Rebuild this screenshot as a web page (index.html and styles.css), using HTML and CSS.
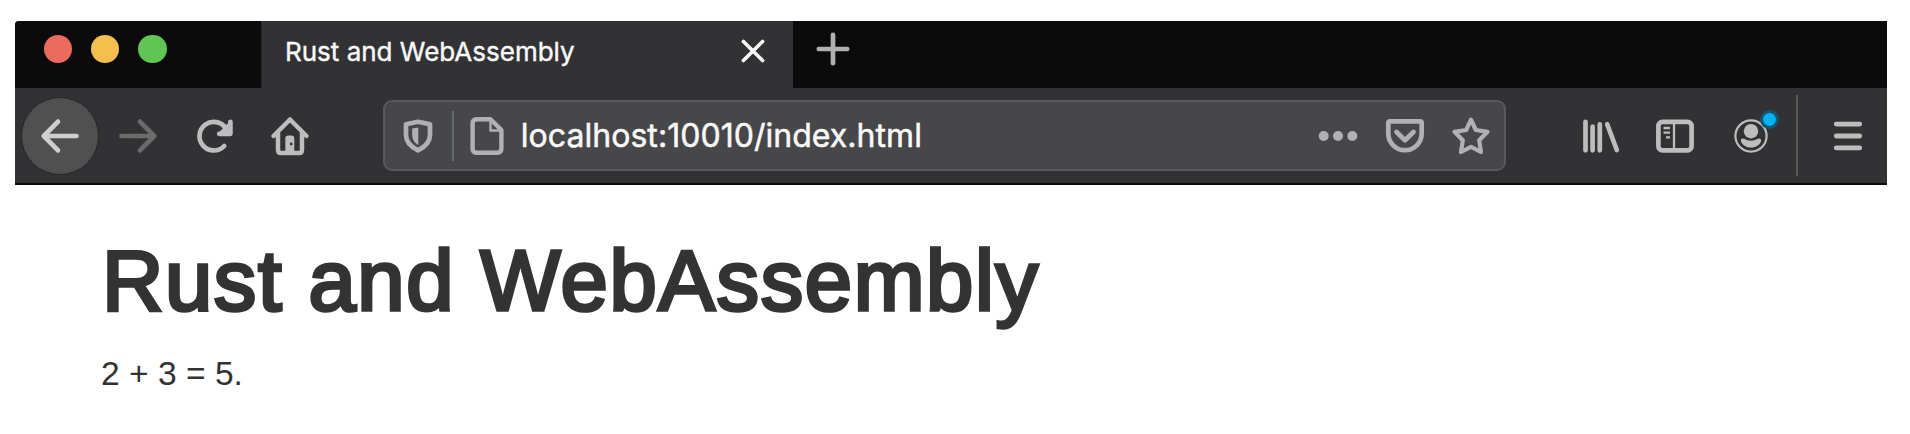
FILE: index.html
```html
<!DOCTYPE html>
<html lang="en">
<head>
<meta charset="utf-8">
<title>Rust and WebAssembly</title>
<link rel="stylesheet" href="styles.css">
</head>
<body>
<div class="browser">
  <div class="tabbar">
    <div class="lights">
      <span class="light red"></span>
      <span class="light yellow"></span>
      <span class="light green"></span>
    </div>
    <div class="tab">
      <span class="tab-title">Rust and WebAssembly</span>
      <svg class="close" viewBox="0 0 24 24"><path d="M2.4 2.4 21.6 21.6M21.6 2.4 2.4 21.6"/></svg>
    </div>
    <svg class="icon plus" viewBox="0 0 40 40"><path d="M20 5.8v28.4M5.8 20h28.4"/></svg>
  </div>
  <div class="toolbar">
    <div class="back">
      <svg class="icon" viewBox="0 0 40 40"><path d="M36.5 20H4M18 5.6 3.8 20 18 34.4"/></svg>
    </div>
    <svg class="icon forward" viewBox="0 0 40 40"><path d="M3.5 20H36M22 5.6 36.2 20 22 34.4"/></svg>
    <svg class="icon reload" viewBox="0 0 40 40">
      <path d="M29.2 30A14.3 14.3 0 1 1 31 12.7"/>
      <path class="solid" d="M33.2 7v11.3H22z"/>
      <path d="M35.4 5.8v12H24.2"/>
    </svg>
    <svg class="icon home" viewBox="0 0 40 40">
      <path d="M3.5 20 20 3.5 36.5 20M8 17v17q0 3 3 3h18q3 0 3-3V17"/>
      <path class="solid" d="M15.3 38V22.5q0-3 3-3h3q3 0 3 3V38z"/>
      <circle class="knob" cx="21.2" cy="28" r="1.4"/>
    </svg>
    <div class="urlbar">
      <svg class="icon shield" viewBox="0 0 40 40">
        <path d="M20 5.8 32 8.2V19q0 9.5-12 15.3Q8 28.5 8 19V8.2z"/>
        <path class="solid" d="M20.3 11.4v17.8Q14.2 25.5 14.2 19v-6.6z"/>
      </svg>
      <span class="divider"></span>
      <svg class="icon doc" viewBox="0 0 40 40">
        <path d="M23.5 3.3H9.5q-3.9 0-3.9 3.9v25.600q0 3.900 3.900 3.900h21q3.900 0 3.900-3.900V14z"/>
        <path class="thin" d="M23.500 4v10.500H34"/>
      </svg>
      <span class="url">localhost:10010/index.html</span>
      <svg class="icon dots" viewBox="0 0 40 40"><circle class="solid" cx="5.700" cy="20" r="5"/><circle class="solid" cx="20" cy="20" r="5"/><circle class="solid" cx="34.300" cy="20" r="5"/></svg>
      <svg class="icon pocket" viewBox="0 0 40 40">
        <path d="M5 5.300h30q1.700 0 1.700 1.700v10.500a16.700 16.700 0 0 1-33.400 0V7q0-1.700 1.700-1.700z"/>
        <path d="m11.500 16 8.500 8.300 8.500-8.300"/>
      </svg>
      <svg class="icon star" viewBox="0 0 40 40"><path d="M20 3.600 24.800 14 36.500 15.800 28.200 24.200 30 36 20 30.800 10 36 11.800 24.200 3.500 15.800 15.200 14z"/></svg>
    </div>
    <svg class="icon library" viewBox="0 0 40 40"><path d="M4.500 5.900v28.400M11.600 10.600v23.700M18.800 8.300v26M26.200 8.200 35.800 34"/></svg>
    <svg class="icon sidebar" viewBox="0 0 40 40">
      <rect x="3.400" y="5.900" width="33.200" height="28.400" rx="4"/>
      <path class="line" d="M19 6v28M8.500 12h6.500M8.500 16.700h6.500M11 21.400h4"/>
    </svg>
    <div class="account">
      <svg class="icon" viewBox="0 0 40 40">
        <circle class="ring" cx="20" cy="20" r="15.600"/>
        <circle class="solid" cx="20" cy="15.200" r="7.200"/>
        <path class="solid" d="M13 22.700Q20 27 27 22.700C29 22 30.800 23.500 30 25.500C26.500 33.500 13.500 33.500 10 25.500C9.200 23.500 11 22 13 22.700z"/>
      </svg>
      <span class="badge"></span>
    </div>
    <span class="toolbar-divider"></span>
    <svg class="icon menu" viewBox="0 0 40 40"><path d="M8.300 8.100h23.400M8.300 20h23.400M8.300 31.900h23.400"/></svg>
  </div>
</div>
<main class="page">
  <h1 class="heading">Rust and WebAssembly</h1>
  <p class="result">2 + 3 = 5.</p>
</main>
</body>
</html>
```
FILE: styles.css
```css
* { box-sizing: border-box; }
body {
  margin: 0;
  padding-top: 21px;
  background: #fff;
  overflow: hidden;
}
.browser {
  width: 1872px;
  margin-left: 15px;
  border-bottom: 2px solid #0b0b0c;
  border-top-left-radius: 4px;
  overflow: hidden;
  background: #323234;
  font-family: Inter, "Liberation Sans", sans-serif;
}
.tabbar {
  display: flex;
  height: 67px;
  background: #0b0b0b;
}
.lights {
  display: flex;
  gap: 19px;
  width: 247px;
  padding: 14px 0 0 28.700px;
  border-right: 1px solid #29292b;
}
.light {
  width: 28.400px;
  height: 28.400px;
  border-radius: 50%;
}
.red { background: #ed6a5e; }
.yellow { background: #f5bf4f; }
.green { background: #61c554; }
.tab {
  display: flex;
  align-items: center;
  justify-content: space-between;
  width: 531px;
  padding: 0 28px 6px 23px;
  background: #323234;
}
.tab-title {
  color: #f9f9fa;
  font-size: 26px;
  line-height: 32px;
  white-space: nowrap;
  -webkit-text-stroke: 0.4px #f9f9fa;
}
.close {
  width: 24px;
  height: 24px;
  margin-top: -2px;
  fill: none;
  stroke: #f9f9fa;
  stroke-width: 3.600;
  stroke-linecap: round;
}
.icon {
  flex: none;
  width: 40px;
  height: 40px;
  fill: none;
  stroke: #bdbdbe;
  stroke-width: 4.700;
  stroke-linecap: round;
  stroke-linejoin: round;
  overflow: visible;
}
.solid { fill: #bdbdbe; stroke: none; }
.plus { margin: 8px 0 0 20.300px; stroke: #b1b1b1; }
.toolbar {
  display: flex;
  align-items: center;
  height: 95px;
}
.back {
  display: flex;
  align-items: center;
  justify-content: center;
  width: 78px;
  height: 78px;
  margin-left: 6px;
  background: #505050;
  border: 1.500px solid #272728;
  border-radius: 50%;
}
.back .icon { stroke: #cfcfcf; }
.forward { margin-left: 19px; stroke: #6b6b6c; }
.reload { margin-left: 36.500px; }
.home { margin-left: 35px; stroke-width: 4.500; }
.knob { fill: #323234; stroke: none; }
.urlbar {
  display: flex;
  align-items: center;
  width: 1123px;
  height: 71px;
  margin-left: 73.800px;
  background: #474749;
  border: 2px solid #59595b;
  border-radius: 9px;
}
.urlbar .icon { stroke: #b1b1b3; }
.urlbar .solid { fill: #b1b1b3; stroke: none; }
.shield { margin-left: 13px; }
.divider {
  width: 2px;
  height: 50px;
  margin-left: 14px;
  background: #616970;
}
.urlbar .doc { margin-left: 13px; stroke-width: 4.400; }
.doc .thin { stroke-width: 2.400; }
.url {
  flex: 1;
  margin-left: 13.500px;
  color: #f9f9fa;
  font-size: 32px;
  line-height: 40px;
  letter-spacing: 0.040px;
  white-space: nowrap;
  -webkit-text-stroke: 0.5px #f9f9fa;
}
.pocket { margin-left: 26.500px; }
.star { margin: 0 13.500px 0 26px; stroke-width: 4.200; }
.library { margin-left: 74.500px; }
.sidebar { margin-left: 34px; }
.sidebar .line { stroke-width: 2.300; stroke-linecap: butt; }
.account {
  position: relative;
  width: 40px;
  height: 40px;
  margin-left: 36px;
}
.account .ring { stroke-width: 2.200; }
.badge {
  position: absolute;
  left: 32px;
  top: -3px;
  width: 13px;
  height: 13px;
  border-radius: 50%;
  background: #00b3f9;
  box-shadow: 0 0 0 3px #1b5368;
}
.toolbar-divider {
  width: 2px;
  height: 81px;
  margin-left: 25px;
  background: #5a5a5b;
}
.menu { margin-left: 30px; stroke-width: 4.900; }
.page {
  padding: 46px 101px 0;
  color: #333;
  font-family: "Liberation Sans", Arial, sans-serif;
}
.heading {
  margin: 0 0 0 1px;
  font-size: 85px;
  font-weight: 400;
  line-height: 100px;
  letter-spacing: 1.600px;
  white-space: nowrap;
  -webkit-text-stroke: 3.500px #333;
}
.result {
  margin: 23px 0 0;
  font-size: 33.600px;
  line-height: 40px;
}
```
